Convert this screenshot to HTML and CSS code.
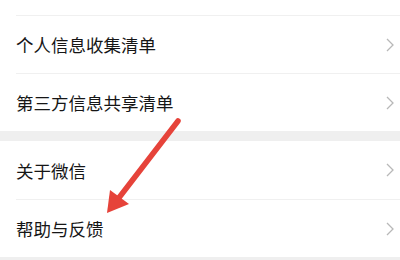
FILE: index.html
```html
<!DOCTYPE html>
<html lang="zh">
<head>
<meta charset="utf-8">
<link rel="stylesheet" href="styles.css">
</head>
<body>
<div class="page">
  <div class="group">
    <div class="stub"></div>
    <div class="row"><span class="label">个人信息收集清单</span><svg class="chev" viewBox="0 0 8 14"><path d="M1 1 L7 7 L1 13" /></svg></div>
    <div class="row"><span class="label">第三方信息共享清单</span><svg class="chev" viewBox="0 0 8 14"><path d="M1 1 L7 7 L1 13" /></svg></div>
  </div>
  <div class="group">
    <div class="row"><span class="label">关于微信</span><svg class="chev" viewBox="0 0 8 14"><path d="M1 1 L7 7 L1 13" /></svg></div>
    <div class="row"><span class="label">帮助与反馈</span><svg class="chev" viewBox="0 0 8 14"><path d="M1 1 L7 7 L1 13" /></svg></div>
  </div>
  <svg class="arrow" viewBox="0 0 400 260" width="400" height="260">
    <line x1="178" y1="121" x2="118" y2="199" />
    <polygon points="107,213 110,190 129,204" />
  </svg>
</div>
</body>
</html>
```

FILE: styles.css
```css
html, body {
  margin: 0;
  padding: 0;
  background: #efefef;
}
.page {
  position: relative;
  width: 400px;
  height: 260px;
  overflow: hidden;
  display: flex;
  flex-direction: column;
  gap: 10px;
  font-family: "Noto Sans CJK SC", "Noto Sans", sans-serif;
}
.group {
  background: #ffffff;
  display: flex;
  flex-direction: column;
}
.stub {
  height: 15px;
}
.row {
  height: 57px;
  display: flex;
  align-items: center;
  justify-content: space-between;
  margin-left: 16px;
  padding-right: 6px;
  border-top: 1px solid #f0f0f0;
}
.group:last-of-type .row:first-child {
  border-top: none;
  height: 58px;
}
.label {
  font-size: 17.5px;
  color: #161616;
}
.chev {
  width: 8px;
  height: 14px;
  fill: none;
  stroke: #b8b8b8;
  stroke-width: 1.3;
}
.arrow {
  position: absolute;
  left: 0;
  top: 0;
}
.arrow line {
  stroke: #e6433a;
  stroke-width: 5.5;
  stroke-linecap: round;
}
.arrow polygon {
  fill: #e6433a;
}
```
